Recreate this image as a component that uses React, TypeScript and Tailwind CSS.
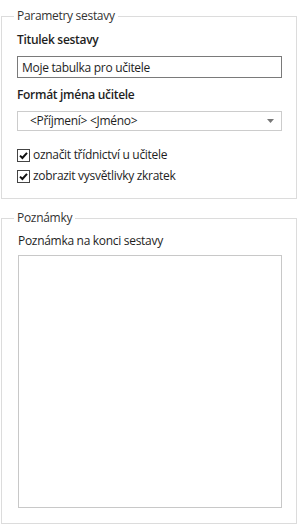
import { useState } from "react"

function Check({ checked, label, onToggle }: { checked: boolean; label: string; onToggle: () => void }) {
  return (
    <label className="flex h-4 items-center gap-[3px] cursor-default" onClick={onToggle}>
      <span className="flex h-[13px] w-[13px] items-center justify-center border border-[#444444] bg-white">
        {checked && (
          <svg width="9" height="9" viewBox="0 0 9 9">
            <path d="M1 4.6 L3.4 7 L8 1.8" fill="none" stroke="#111111" strokeWidth="2" />
          </svg>
        )}
      </span>
      <span>{label}</span>
    </label>
  )
}

export default function App() {
  const [title, setTitle] = useState("Moje tabulka pro učitele")
  const [marks, setMarks] = useState(true)
  const [hints, setHints] = useState(true)

  return (
    <div
      className="w-[298px] h-[528px] bg-white px-[1px] text-[12px] leading-4 tracking-[-0.3px] text-[#1e1e1e]"
      style={{ fontFamily: '"Open Sans", "Noto Sans", sans-serif' }}
    >
      <div className="pt-4">
        {/* Parametry sestavy */}
        <div className="relative w-[296px] border border-[#dcdcdc] pl-[15px] pr-[14px] pt-[15px] pb-[14px]">
          <span className="absolute -top-[9px] left-[12px] bg-white px-[3px] text-[#333333]">Parametry sestavy</span>
          <div className="font-semibold">Titulek sestavy</div>
          <input
            value={title}
            onChange={e => setTitle(e.target.value)}
            className="mt-2 block h-[22px] w-full border border-[#7a7a7a] px-1 tracking-[-0.3px] outline-none"
          />
          <div className="mt-[9px] font-semibold">Formát jména učitele</div>
          <div className="mt-2 flex h-5 w-full items-center justify-between border border-[#cccccc] pl-3 pr-[7px]">
            <span>&lt;Příjmení&gt; &lt;Jméno&gt;</span>
            <svg width="7" height="4" viewBox="0 0 7 4">
              <path d="M0 0 H7 L3.5 4 Z" fill="#777777" />
            </svg>
          </div>
          <div className="mt-4 flex flex-col gap-[5px]">
            <Check checked={marks} label="označit třídnictví u učitele" onToggle={() => setMarks(!marks)} />
            <Check checked={hints} label="zobrazit vysvětlivky zkratek" onToggle={() => setHints(!hints)} />
          </div>
        </div>

        {/* Poznámky */}
        <div className="relative mt-[19px] w-[296px] border border-[#dcdcdc] pl-4 pr-[14px] pt-[14px] pb-[15px]">
          <span className="absolute -top-[9px] left-[12px] bg-white px-[3px] text-[#333333]">Poznámky</span>
          <div>Poznámka na konci sestavy</div>
          <textarea className="mt-[6px] block h-[253px] w-full resize-none border border-[#c8c8c8] outline-none" />
        </div>
      </div>
    </div>
  )
}
